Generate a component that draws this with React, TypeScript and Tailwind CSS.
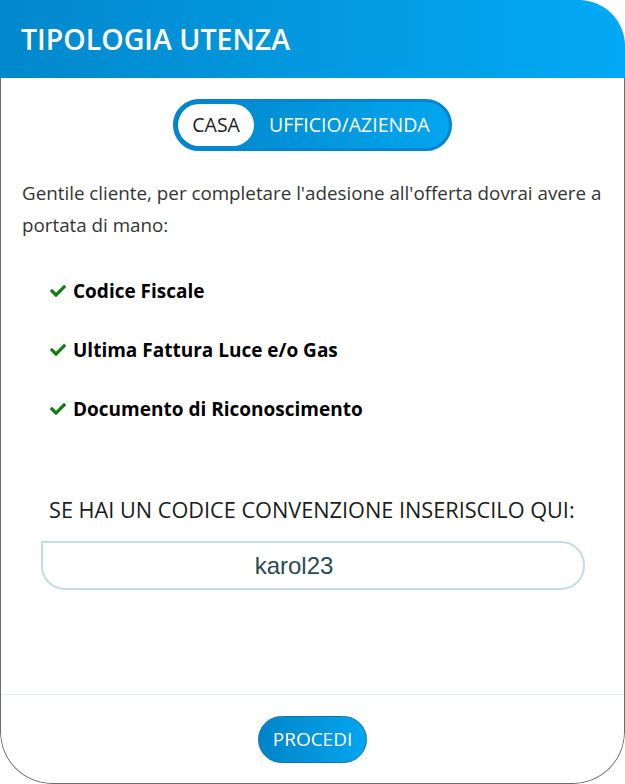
import React from 'react'
import { FaCheck } from 'react-icons/fa'

const items = ['Codice Fiscale', 'Ultima Fattura Luce e/o Gas', 'Documento di Riconoscimento']

function App() {
  return (
    <div className="w-[625px] h-[784px] bg-white font-['Open_Sans',sans-serif]">
      <div className="flex flex-col h-full rounded-tr-[46px] rounded-b-[52px] overflow-hidden">
        {/* Header */}
        <div className="h-[78px] shrink-0 flex items-center px-[21px] bg-gradient-to-r from-[#0288cc] to-[#03a9f4]">
          <h1 className="text-white text-[28.5px] font-semibold leading-none">TIPOLOGIA UTENZA</h1>
        </div>

        {/* Body */}
        <div className="flex-1 flex flex-col border-x border-b border-[#6b6b6b] rounded-b-[52px]">
          <div className="flex-1 flex flex-col">
            {/* Toggle */}
            <div className="flex justify-center mt-[21px]">
              <div className="flex items-center h-[52px] p-[2px] rounded-full border-[3px] border-[#0386cf] bg-gradient-to-r from-[#0284c8] to-[#03a6ef]">
                <span className="h-[42px] px-[14px] flex items-center rounded-full bg-white text-[19.5px] text-[#222]">CASA</span>
                <span className="pl-[15px] pr-[17px] text-[19.5px] text-white">UFFICIO/AZIENDA</span>
              </div>
            </div>

            <p className="px-[21px] mt-[26px] text-[18.8px] leading-[32px] text-[#333]">
              Gentile cliente, per completare l'adesione all'offerta dovrai avere a portata di mano:
            </p>

            <ul className="mt-[38px] pl-[48px] flex flex-col gap-[35px]">
              {items.map((t) => (
                <li key={t} className="flex items-center gap-[6px] h-[24px] text-[19px] font-bold text-black">
                  <FaCheck className="text-[#117d11] w-[18px] h-[16px]" />
                  {t}
                </li>
              ))}
            </ul>

            <h2 className="mt-[74px] pl-[48px] text-[21.7px] leading-[30px] font-medium text-[#1a1a1a]">
              SE HAI UN CODICE CONVENZIONE INSERISCILO QUI:
            </h2>

            <div className="ml-[40px] mr-[39px] mt-[16px] h-[49px] flex items-center justify-center pr-[38px] border-2 border-[#c6dde3] rounded-[24px] rounded-tl-none">
              <span className="font-['Liberation_Sans',sans-serif] text-[24px] text-[#2a4a54]">karol23</span>
            </div>
          </div>

          {/* Footer */}
          <div className="h-[89px] shrink-0 border-t border-[#e2eef2] flex justify-center pt-[21px]">
            <button className="h-[47px] px-[14px] rounded-full border border-[#0f76a6] bg-gradient-to-r from-[#0284c8] to-[#03a6ef] text-white text-[19px]">
              PROCEDI
            </button>
          </div>
        </div>
      </div>
    </div>
  )
}

export default App
